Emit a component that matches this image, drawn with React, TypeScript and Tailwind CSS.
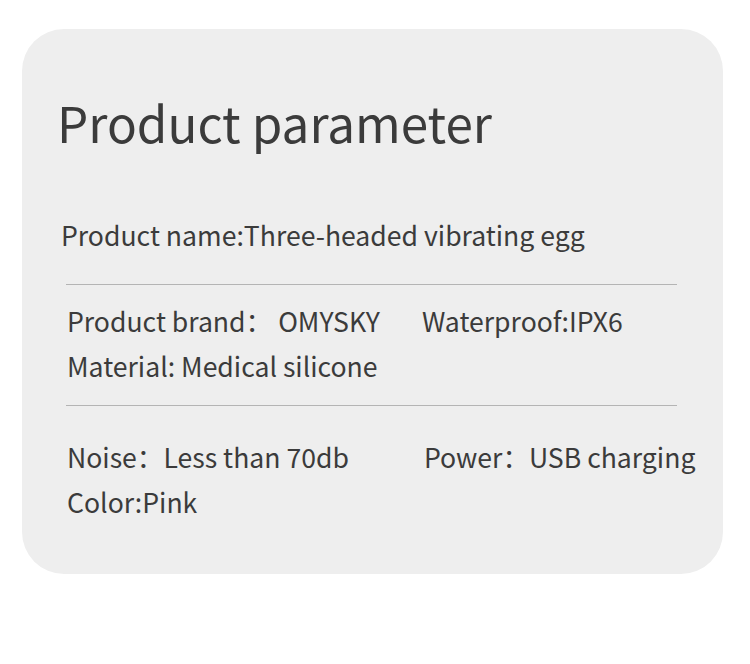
import React from 'react';

const font = { fontFamily: '"Noto Sans CJK SC", "Noto Sans", sans-serif' };

const Divider = () => <div className="ml-[44px] h-px w-[611px] bg-[#b4b4b4]" />;

const App = () => {
  return (
    <div className="w-[750px] h-[664px] bg-white pt-[29px] pl-[22px]" style={font}>
      <div className="w-[701px] h-[545px] rounded-[42px] bg-[#eeeeee] pt-[68px] text-[#3b3b3b]">
        <h1 className="pl-[35px] text-[49.4px] leading-[50px] font-normal">Product parameter</h1>

        <p className="mt-[75px] pl-[39px] text-[26.6px] leading-[26px]">Product name:Three-headed vibrating egg</p>

        <div className="mt-[36px]">
          <Divider />
        </div>

        <div className="mt-[13px] pl-[45px] text-[26.6px] leading-[45px]">
          <div className="flex whitespace-nowrap">
            <span className="w-[355px]">Product brand： OMYSKY</span>
            <span>Waterproof:IPX6</span>
          </div>
          <div>Material: Medical silicone</div>
        </div>

        <div className="mt-[17px]">
          <Divider />
        </div>

        <div className="mt-[28px] pl-[45px] text-[26.6px] leading-[45px]">
          <div className="flex whitespace-nowrap">
            <span className="w-[357px]">Noise：Less than 70db</span>
            <span>Power：USB charging</span>
          </div>
          <div>Color:Pink</div>
        </div>
      </div>
    </div>
  );
};

export default App;
